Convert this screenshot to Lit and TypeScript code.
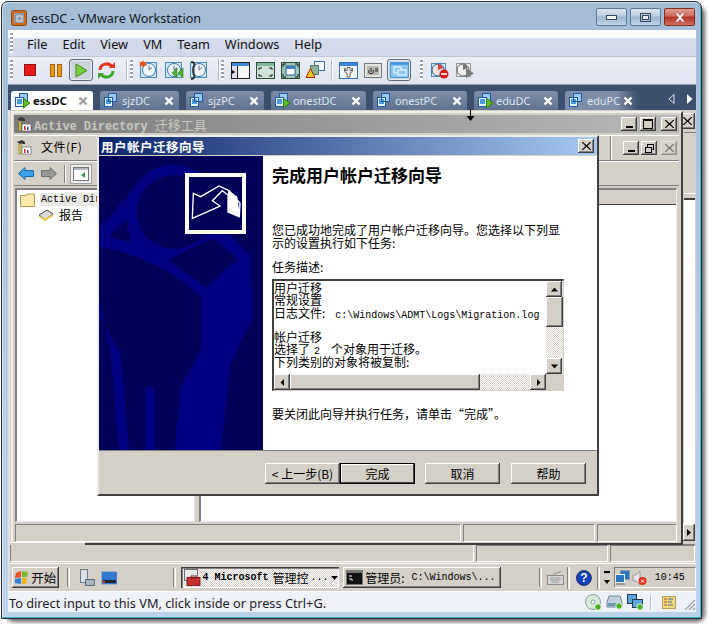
import { LitElement, html, css, svg } from "lit";
import { customElement } from "lit/decorators.js";

const vmIcon = (play: boolean) => html`<svg class="tabicon" width="17" height="17" viewBox="0 0 17 17">
  <rect x="5.5" y="1.5" width="8" height="8" fill="#9cc8ec" stroke="#1c5ca8"/>
  <rect x="1.5" y="5.5" width="8" height="9" fill="#e8f3fc" stroke="#1c5ca8"/>
  <rect x="3" y="7" width="5" height="5" fill="#4a9ade"/>
  ${play ? svg`<path d="M9.5 6.5 L16 11 L9.5 16 Z" fill="#5cc020" stroke="#2e8010"/>` : svg`<rect x="5.5" y="5.5" width="4" height="4" fill="none" stroke="#1c5ca8"/>`}
</svg>`;

const clock = (extra: unknown) => html`<svg width="20" height="20" viewBox="0 0 20 20">
  <rect x="1.5" y="2.5" width="16" height="15" fill="#cfe4f6" stroke="#4a8cc4"/>
  <circle cx="10" cy="10" r="6.5" fill="#eef6fc" stroke="#3c78ac"/>
  <path d="M10 5.5V10L13 7.5" fill="none" stroke="#5a6a7a"/>
  ${extra}
</svg>`;

const winIcon = (inner: unknown, border = "#222", title = "#3a8ad8") => html`<svg width="19" height="17" viewBox="0 0 19 17">
  <rect x=".5" y=".5" width="18" height="16" fill="#f6f6f6" stroke="${border}"/>
  <rect x="1" y="1" width="17" height="3" fill="${title}"/>
  ${inner}
</svg>`;

const SB = (d: string) => html`<div class="b3 sbtn"><svg width="7" height="7" viewBox="0 0 7 7"><path d="${d}" fill="#000"/></svg></div>`;

const UP = "M3.5 1.5L7 5.5H0Z", DN = "M0 1.5H7L3.5 5.5Z", LF = "M5 0V7L1.5 3.5Z", RT = "M2 0V7L5.5 3.5Z";

const ICON_X = html`<svg width="9" height="8" viewBox="0 0 9 8"><path d="M1 0L4.5 3.2L8 0H9V.5L5.5 4L9 7.5V8H8L4.5 4.8L1 8H0V7.5L3.5 4L0 .5V0Z" fill="#000"/></svg>`;
const dot = svg`<circle cx="0" cy="0" r="3.2" fill="#48b020" stroke="#fff" stroke-width=".8"/>`;
const toolIcon = html`<svg width="16" height="16" viewBox="0 0 16 16"><path d="M1 3L6 1L9 3V5H6V4L4 5Z" fill="#333"/><rect x="3" y="5" width="2" height="10" fill="#f0e010" stroke="#555" stroke-width=".5"/><rect x="6" y="8" width="9" height="7" fill="#fff" stroke="#555" stroke-width=".6"/><rect x="8" y="10" width="1.5" height="4" fill="#d02020"/><rect x="11" y="11" width="1.5" height="3" fill="#304080"/></svg>`;

const TABS = [
  { n: "essDC", w: 82, play: true, on: true },
  { n: "sjzDC", w: 79, play: false },
  { n: "sjzPC", w: 78, play: false },
  { n: "onestDC", w: 95, play: true },
  { n: "onestPC", w: 94, play: false },
  { n: "eduDC", w: 84, play: true },
  { n: "eduPC", w: 73, play: false },
];

const grip = html`<span class="grip"></span>`;

@customElement("app-root")
export class AppRoot extends LitElement {
  static styles = css`
    :host { display: block; width: 708px; height: 624px; background: #fff; overflow: hidden; position: relative; font-family: "Noto Sans", "Noto Sans CJK SC", sans-serif; }
    * { box-sizing: border-box; }
    .shadow { position: absolute; left: 6px; top: 6px; width: 699px; height: 616px; background: #666; filter: blur(2px); border-radius: 8px; }
    .win { position: relative; margin: 1px 0 0 1px; width: 701px; height: 618px; border: 1px solid #2a2f35; border-radius: 7px 7px 0 0; background: linear-gradient(180deg, #a4bcd6 0, #b6cde4 60%, #bcd4ea 100%); box-shadow: inset 1px 1px rgba(255,255,255,.45), inset -1px -1px #38b0d0; display: flex; flex-direction: column; padding: 0 5px 6px 6px; }
    .title { height: 28px; display: flex; align-items: center; gap: 4px; padding: 4px 0 0 3px; font-size: 12.6px; color: #10181f; flex: none; }
    .title .sp { flex: 1; }
    .caps { display: flex; gap: 3px; padding: 0 1px 0 0; margin-top: -2px; }
    .cap { width: 31px; height: 18px; border: 1px solid #5a7a9a; border-radius: 2px; background: linear-gradient(180deg,#dde8f2 0,#b8cce0 45%,#9cb6d0 50%,#c0d6e8 100%); display: flex; align-items: center; justify-content: center; }
    .cap.close { background: linear-gradient(180deg,#e0a090 0,#cc6a58 45%,#b03020 50%,#d07060 100%); border-color: #803020; }
    .menu { height: 27px; flex: none; background: linear-gradient(180deg, #fff 0, #f8f9fc 30%, #d4dbec 34%, #d2d9ec 100%); border-bottom: 1px solid #c0c6d4; display: flex; align-items: center; padding-left: 2px; font-size: 12.75px; color: #101010; }
    .menu .items { display: flex; gap: 15px; padding: 1px 0 0 14px; }
    .grip { display: block; width: 3px; align-self: stretch; margin: 3px 0; background: repeating-linear-gradient(180deg, #9aa0ac 0 2px, #fff 2px 4px); }
    .tools { height: 28px; flex: none; background: linear-gradient(180deg,#eceff6,#dfe4f0); border-bottom: 1px solid #9aa0b0; display: flex; align-items: center; padding: 0 0 1px 2px; }
    .tools svg { display: block; }
    .tg { display: flex; align-items: center; }
    .sep { width: 2px; height: 22px; background: #b8bcc8; border-right: 1px solid #fff; }
    .tb { display: flex; align-items: center; justify-content: center; height: 22px; }
    .tb.on { border: 1px solid #606a78; border-radius: 3px; background: #cdd3dd; box-shadow: inset 0 0 0 1px #e8ecf2; }
    .strip { height: 25px; flex: none; background: #3c5070; display: flex; align-items: flex-end; gap: 7px; padding-left: 3px; position: relative; }
    .tab { height: 19px; border-radius: 3px 3px 0 0; background: linear-gradient(180deg,#7f8ea8,#5f7290); color: #dfe6f0; font-size: 10.9px; display: flex; align-items: center; padding: 0 5px 0 3px; gap: 2px; line-height: 19px; }
    .tab .nm { flex: 1; }
    .tab.on { background: #fff; color: #101010; font-weight: 700; font-size: 11.4px; }
    .tab.fade { background: linear-gradient(90deg,#7f8ea8 70%,#3c5070); }
    .tab svg.x { flex: none; }
    .arrows { position: absolute; right: 3px; top: 9px; display: flex; gap: 11px; }
    .vm { flex: 1; display: flex; flex-direction: column; background: #d4d0c8; border-left: 2px solid #e0e0e4; min-height: 0; font-family: "Liberation Mono", "Noto Sans CJK SC", monospace; font-size: 12px; color: #000; }
    .desk { height: 452px; position: relative; flex: none; background: #d4d0c8; }
    .back { position: absolute; inset: 0; }
    .back-x { position: absolute; right: 1px; top: 3px; width: 16px; height: 16px; }
    .back-col { position: absolute; right: 0; top: 22px; width: 12px; height: 62px; border-top: 1px solid #808080; border-bottom: 1px solid #fff; }
    .back-white { position: absolute; right: 1px; top: 88px; width: 11px; height: 326px; background: #fff; border-top: 2px solid #404040; }
    .back-arrow { position: absolute; right: 1px; top: 414px; width: 12px; height: 17px; }
    .back-status { position: absolute; left: 0; right: 1px; top: 434px; height: 18px; display: grid; grid-template-columns: 464px 132px 1fr; gap: 2px; border-top: 1px solid #808080; }
    .cell { border-top: 1px solid #808080; border-left: 1px solid #808080; border-right: 1px solid #fff; border-bottom: 1px solid #fff; }
    .b3 { background: #d4d0c8; box-shadow: inset -1px -1px #404040, inset 1px 1px #fff, inset -2px -2px #808080; display: flex; align-items: center; justify-content: center; }
    .ad { position: absolute; left: 1px; top: 1px; width: 672px; height: 434px; background: #d4d0c8; border-top: 2px solid #f0eee8; border-left: 2px solid #f0eee8; border-right: 2px solid #404040; border-bottom: 2px solid #404040; padding: 2px 2px 1px 1px; display: flex; flex-direction: column; }
    .patch { position: absolute; left: 0; top: 432px; width: 75px; height: 3px; background: #d4d0c8; border-top: 1px solid #fff; }
    .ad-t { height: 18px; flex: none; background: linear-gradient(90deg, #7c7c7c, #b8b8b8); display: flex; align-items: center; color: #c8c8c0; font-weight: 700; gap: 2px; padding-left: 2px; font-size: 12px; letter-spacing: -.1px; }
    .ad-t span.cjk { font-weight: 400; font-size: 13px; letter-spacing: 0; }
    .ad-t .sp { flex: 1; }
    .mb { width: 16px; height: 14px; margin-left: 1px; flex: none; }
    .ad-t .mb:last-child { margin-right: 2px; }
    .ad-m { height: 26px; flex: none; margin-top: 2px; display: flex; align-items: center; border-top: 1px solid #fff; border-bottom: 1px solid #808080; gap: 6px; padding: 0 0 3px 2px; font-size: 12px; font-family: "Noto Sans CJK SC", sans-serif; letter-spacing: .5px; }
    .ad-m .sp { flex: 1; }
    .ad-m .div { width: 2px; align-self: stretch; margin-bottom: -3px; background: #808080; border-right: 1px solid #fff; }
    .ad-m .mdi { display: flex; gap: 1px; padding: 3px 2px 0 4px; }
    .ad-tb { height: 25px; flex: none; display: flex; align-items: center; gap: 7px; padding-left: 4px; border-bottom: 1px solid #808080; border-top: 1px solid #fff; }
    .ad-tb .v { width: 2px; height: 18px; background: #808080; border-right: 1px solid #fff; }
    .ad-tb .t2 { margin-left: -3px; }
    .ad-b { flex: 1; display: grid; grid-template-columns: 180px 1fr; gap: 4px; margin: 2px 2px 2px 1px; min-height: 0; }
    .pane { background: #fff; border-top: 2px solid #808080; border-left: 2px solid #808080; border-right: 1px solid #e8e8e8; border-bottom: 1px solid #e8e8e8; }
    .tree { padding: 1px 0 0 3px; }
    .tree .r { display: flex; align-items: center; gap: 5px; height: 17px; white-space: nowrap; overflow: hidden; }
    .tree .r .sel { font-size: 10px; background: #e8e8e4; padding: 1px 0 1px 1px; }
    .tree .r + .r { padding-left: 18px; margin-top: -2px; font-family: "Noto Sans CJK SC", sans-serif; font-size: 12px; }
    .head { height: 15px; background: #d4d0c8; border-bottom: 1px solid #404040; }
    .ad-s { height: 18px; flex: none; display: grid; grid-template-columns: 446px 132px 1fr; gap: 2px; margin: 0 2px 0 1px; }
    .dlg { position: absolute; left: 87px; top: 25px; width: 502px; height: 361px; background: #d4d0c8; border-top: 2px solid #eeece6; border-left: 2px solid #eeece6; border-right: 2px solid #404040; border-bottom: 2px solid #404040; display: flex; flex-direction: column; font-family: "Noto Sans CJK SC", sans-serif; }
    .dlg-t { height: 18px; flex: none; margin-bottom: 1px; background: linear-gradient(90deg,#0a246a,#a6caf0); color: #fff; font-size: 12.5px; font-weight: 700; display: flex; align-items: center; padding: 0 2px 0 2px; letter-spacing: .5px; justify-content: space-between; }
    .dlg-t .b3 { width: 16px; height: 14px; margin-right: 1px; }
    .dlg-c { height: 295px; flex: none; display: flex; background: #fff; border-bottom: 1px solid #808080; min-height: 0; }
    .side { width: 164px; height: 294px; flex: none; display: block; }
    .body { flex: 1; padding: 9px 0 0 9px; min-width: 0; font-size: 12px; line-height: 13px; }
    .h { font-size: 17px; font-weight: 700; line-height: 20px; margin: 0 0 38px; }
    .p { margin: 0 0 11px; letter-spacing: 0; }
    .lb { width: 292px; height: 112px; border-top: 2px solid #404040; border-left: 2px solid #404040; border-right: 1px solid #d4d0c8; border-bottom: 1px solid #d4d0c8; display: grid; grid-template-columns: 1fr 17px; grid-template-rows: 1fr 16px; margin-bottom: 16px; }
    .lbt { padding: 1px 0 0 0; overflow: hidden; font-size: 12px; min-height: 0; }
    .ln { height: 12.3px; line-height: 12.3px; white-space: nowrap; }
    .ln .en { font-family: "Liberation Mono", monospace; font-size: 10px; margin: 0 11px 0 4px; }
    .ln .en.f { margin: 0 0 0 10px; }
    .vs, .hs { display: flex; background: repeating-conic-gradient(#d4d0c8 0 25%, #fff 0 50%) 0 0 / 2px 2px; }
    .vs { flex-direction: column; }
    .sbtn { width: 16px; height: 16px; flex: none; }
    .vs .th { height: 30px; flex: none; }
    .vs .sp, .hs .sp { flex: 1; }
    .hs .th { width: 190px; flex: none; }
    .corner { background: #d4d0c8; }
    .dlg-b { flex: 1; display: flex; align-items: flex-start; padding: 12px 0 0 166px; }
    .btn { width: 75px; height: 21px; font-size: 12px; letter-spacing: 0; line-height: 1; }
    .btn.def { outline: 1px solid #000; outline-offset: -1px; box-shadow: inset -2px -2px #404040, inset 2px 2px #fff; width: 75px; }
    .m10 { margin-left: 10px; }
    .m11 { margin-left: 11px; }
    .bar { height: 29px; flex: 1; display: flex; align-items: center; border-top: 1px solid #fff; padding-left: 2px; margin-top: 1px; font-family: "Noto Sans CJK SC", sans-serif; }
    .start { width: 47px; height: 21px; gap: 1px; font-size: 12.5px; }
    .bsep { width: 3px; height: 19px; border-left: 1px solid #808080; border-right: 1px solid #fff; background: #e8e6e0; margin: 0 8px; }
    .tk { width: 159px; height: 21px; margin-right: 4px; display: flex; align-items: center; justify-content: flex-start; gap: 2px; white-space: nowrap; padding-left: 3px; font-size: 12px; overflow: hidden; }
    .tk.on { background: repeating-conic-gradient(#d4d0c8 0 25%, #fff 0 50%) 0 0 / 2px 2px; box-shadow: inset 1px 1px #404040, inset 2px 2px #808080, inset -1px -1px #fff; }
    .tk .en { font-family: "Liberation Mono", monospace; font-size: 10px; }
    .tk .en.num { font-weight: 700; margin-left: -1px; margin-right: 2px; }
    .tk .en.path { margin-left: 5px; }
    .tk svg { flex: none; }
    .tray { height: 21px; width: 83px; display: flex; align-items: center; gap: 2px; padding-left: 0; margin-left: 4px; border-top: 1px solid #808080; border-left: 1px solid #808080; border-right: 1px solid #fff; border-bottom: 1px solid #fff; font-family: "Liberation Mono", monospace; font-size: 10px; }
    .status { height: 21px; flex: none; background: #eff1f8; border-top: 1px solid #fff; display: flex; align-items: center; padding: 1px 0 0 1px; font-size: 12.75px; color: #1c1c28; }
    .status .sp { flex: 1; }
    .status .ic { display: flex; align-items: center; gap: 4px; }
    .status svg { display: block; }
    .cursor { position: absolute; left: 466px; top: 110px; }
  `;

  render() {
    return html`
      <div class="shadow"></div>
      <div class="win">
        <div class="title">
          <svg width="16" height="16" viewBox="0 0 16 16"><rect x=".5" y=".5" width="15" height="15" rx="2" fill="#d06a18" stroke="#8c4a14"/><rect x="3" y="3" width="10" height="10" fill="#8a9aaa"/><rect x="6" y="6" width="5" height="5" fill="none" stroke="#e8e8e8"/></svg>
          <span>essDC - VMware Workstation</span>
          <span class="sp"></span>
          <div class="caps">
            <div class="cap"><svg width="11" height="5"><rect x=".5" y=".5" width="10" height="4" fill="#f0f4f8" stroke="#38485c"/></svg></div>
            <div class="cap"><svg width="11" height="9"><rect x=".5" y=".5" width="10" height="8" fill="none" stroke="#38485c"/><rect x="2.5" y="2.5" width="6" height="4" fill="#eef" stroke="#38485c"/></svg></div>
            <div class="cap close"><svg width="12" height="9" viewBox="0 0 12 9"><path d="M1 0H4L6 2.5L8 0H11L7.5 4.5L11 9H8L6 6.5L4 9H1L4.5 4.5Z" fill="#fff" stroke="#7a4030" stroke-width=".5"/></svg></div>
          </div>
        </div>

        <div class="menu">
          ${grip}
          <div class="items">${["File","Edit","View","VM","Team","Windows","Help"].map(m => html`<span>${m}</span>`)}</div>
        </div>

        <div class="tools">
          ${grip}
          <div class="tg" style="margin-left:11px"><svg width="12" height="12"><rect x=".5" y=".5" width="11" height="11" fill="#e81818" stroke="#8c1010"/></svg></div>
          <div class="tg" style="margin-left:14px"><svg width="13" height="13"><rect x=".5" y=".5" width="4" height="12" fill="#f09a10" stroke="#a86008"/><rect x="7.5" y=".5" width="4" height="12" fill="#f09a10" stroke="#a86008"/></svg></div>
          <div class="tb on" style="margin-left:6px;width:24px"><svg width="13" height="15" viewBox="0 0 13 15"><path d="M1 1L12 7.5L1 14Z" fill="#78d040" stroke="#3a8c18"/></svg></div>
          <div class="tg" style="margin-left:5px"><svg width="17" height="17" viewBox="0 0 17 17"><path d="M2 8A6.5 6.5 0 0 1 14 5" fill="none" stroke="#e03020" stroke-width="3"/><path d="M15 9A6.5 6.5 0 0 1 3 12" fill="none" stroke="#40a830" stroke-width="3"/><path d="M11 6H17V0Z" fill="#e03020"/><path d="M6 11H0V17Z" fill="#40a830"/></svg></div>
          <span class="sep" style="margin-left:11px"></span><span class="grip" style="margin-left:2px"></span>
          <div class="tg" style="margin-left:6px;gap:5px">
            ${clock(svg`<path d="M4 0L5 2.5L8 1.5L6.5 4L8 6L5 5.5L4 8L3 5.5L0 6L1.5 4L0 1.5L3 2.5Z" fill="#f05010"/>`)}
            ${clock(svg`<path d="M19 8V18L14 13ZM13 8V18L8 13Z" fill="#50b030" stroke="#2a7a18" stroke-width=".6"/>`)}
            ${clock(svg`<path d="M2 2C6 2 6 5 4.5 7V14C6 16 6 19 2 19" fill="none" stroke="#333" stroke-width="2"/>`)}
          </div>
          <span class="sep" style="margin-left:9px"></span><span class="grip" style="margin-left:1px"></span>
          <div class="tg" style="margin-left:7px;gap:6px">
            ${winIcon(svg`<rect x="1" y="4" width="5" height="12" fill="#dde"/><path d="M1 8L4 10L1 12Z" fill="#000"/><path d="M6.5 4V16" stroke="#222"/>`)}
            ${winIcon(svg`<rect x="1" y="4" width="17" height="12" fill="#cfe4d8"/><path d="M3 8V6H6M16 8V6H13M3 12V14H6M16 12V14H13" fill="none" stroke="#111"/>`, "#2a4a38", "#7ab898")}
            ${winIcon(svg`<rect x="1" y="1" width="17" height="15" fill="#9cc8b4"/><rect x="5" y="4" width="9" height="9" fill="#fff" stroke="#3060a0"/><rect x="5" y="4" width="9" height="3" fill="#4080c8"/><path d="M2 5V2H5M17 5V2H14M2 12V15H5M17 12V15H14" fill="none" stroke="#111"/>`, "#2a4a38", "#9cc8b4")}
            <svg width="19" height="18" viewBox="0 0 19 18"><rect x="8.5" y=".5" width="10" height="9" fill="#f4f8fc" stroke="#3a6ca8"/><rect x="4.5" y="4.5" width="8" height="9" fill="#8ab098" stroke="#5a7a68"/><path d="M4.5 7.5L9 16.5H0Z" fill="#f8d020" stroke="#b02010"/></svg>
          </div>
          <span class="sep" style="margin-left:6px"></span>
          <div class="tg" style="margin-left:6px;gap:6px">
            ${winIcon(svg`<path d="M6 6C4.5 9 6.5 11 8 11V15H11V11C12.5 11 14.5 9 13 6V8.5H11V5.5H8V8.5H6Z" fill="#e8e8e8" stroke="#333" stroke-width=".7"/>`, "#2c70c0", "#3a8ad8")}
            <svg width="18" height="15" viewBox="0 0 18 15"><rect x=".5" y=".5" width="17" height="14" fill="#e6e6e0" stroke="#777"/><rect x="3" y="3" width="12" height="9" fill="#b8b8b0"/><path d="M7 5V9M5 7A2.4 2.4 0 1 0 9 7M11 6H14M11 8H14" fill="none" stroke="#222"/></svg>
          </div>
          <div class="tb on" style="margin-left:5px;width:24px"><svg width="19" height="16" viewBox="0 0 19 16"><rect width="19" height="16" fill="#4a9ae0"/><rect x="1" y="3" width="17" height="12" fill="#8cc4f0"/><rect x="4" y="5" width="7" height="6" fill="none" stroke="#fff"/><rect x="8" y="8" width="8" height="5" fill="#8cc4f0" stroke="#fff"/></svg></div>
          <span class="grip" style="margin-left:9px"></span>
          <div class="tg" style="margin-left:8px;gap:7px">
            <svg width="18" height="18" viewBox="0 0 18 18"><rect x=".5" y="2.5" width="14" height="13" fill="#cfe4f6" stroke="#4a8cc4"/><circle cx="7" cy="9" r="6" fill="#f0e0e0" stroke="#405a78"/><path d="M7 3V9L12 7A6 6 0 0 0 7 3Z" fill="#d04040"/><circle cx="13" cy="13" r="4.5" fill="#e01818"/><rect x="10" y="12.2" width="6" height="1.6" fill="#fff"/></svg>
            <svg width="18" height="18" viewBox="0 0 18 18"><rect x=".5" y="2.5" width="14" height="13" fill="#e8e8e8" stroke="#999"/><circle cx="7" cy="9" r="6" fill="#f0f0f0" stroke="#666"/><path d="M7 3V9L12 7A6 6 0 0 0 7 3Z" fill="#777"/><path d="M10 7L18 12.5L10 17Z" fill="#788078"/></svg>
          </div>
        </div>

        <div class="strip">
          ${TABS.map((t, i) => html`
            <div class="tab ${t.on ? "on" : ""} ${i === 6 ? "fade" : ""}" style="width:${t.w}px">
              ${vmIcon(t.play)}
              <span class="nm">${t.n}</span>
              <svg class="x" width="10" height="10" viewBox="0 0 10 10"><path d="M1.5 1.5L8.5 8.5M8.5 1.5L1.5 8.5" stroke="${t.on ? "#a0a0a0" : "#fff"}" stroke-width="2.4"/></svg>
            </div>`)}
          <div class="arrows">
            <svg width="7" height="10"><path d="M6 .5V9.5L1 5Z" fill="#3c5070" stroke="#e0e4ea"/></svg>
            <svg width="7" height="10"><path d="M1 0V10L6.5 5Z" fill="#fff"/></svg>
          </div>
        </div>

        <div class="vm">
          <div class="desk">
            <div class="back">
              <div class="back-x b3">${ICON_X}</div>
              <div class="back-col"></div>
              <div class="back-white"></div>
              <div class="back-arrow b3"><svg width="5" height="7"><path d="M0 0V7L4 3.5Z"/></svg></div>
              <div class="back-status"><div class="cell" style="border-top:0"></div><div class="cell"></div><div class="cell"></div></div>
            </div>

            <div class="ad">
              <div class="ad-t">
                ${toolIcon}
                <span>Active Directory <span class="cjk">迁移工具</span></span>
                <span class="sp"></span>
                <div class="b3 mb" style="align-items:flex-end;padding-bottom:3px"><svg width="7" height="2"><rect width="7" height="2"/></svg></div>
                <div class="b3 mb"><svg width="10" height="10"><rect x=".5" y=".5" width="9" height="9" fill="none" stroke="#000"/><rect y="0" width="10" height="2"/></svg></div>
                <div class="b3 mb" style="margin-left:3px">${ICON_X}</div>
              </div>
              <div class="ad-m">
                ${toolIcon}
                <span style="margin-left:3px">文件(F)</span>
                <span class="sp"></span>
                <span class="div"></span>
                <div class="mdi">
                  <div class="b3 mb" style="align-items:flex-end;padding-bottom:3px"><svg width="7" height="2"><rect width="7" height="2"/></svg></div>
                  <div class="b3 mb"><svg width="9" height="9"><rect x="2.5" y=".5" width="6" height="5" fill="none" stroke="#000"/><rect x=".5" y="3.5" width="6" height="5" fill="#d4d0c8" stroke="#000"/></svg></div>
                  <div class="b3 mb" style="margin-left:3px;opacity:.45">${ICON_X}</div>
                </div>
              </div>
              <div class="ad-tb">
                <svg width="16" height="13" viewBox="0 0 16 13"><path d="M.5 6.5L7 .5V3.5H15.5V9.5H7V12.5Z" fill="#3aa0e8" stroke="#1a6aa8"/></svg>
                <svg width="16" height="13" viewBox="0 0 16 13"><path d="M15.5 6.5L9 .5V3.5H.5V9.5H9V12.5Z" fill="#989898" stroke="#707070"/></svg>
                <span class="v"></span>
                <svg class="t2" width="22" height="20" viewBox="0 0 22 20"><rect x=".5" y=".5" width="21" height="19" fill="#eee" stroke="#a0a0a0"/><rect x="3.5" y="3.5" width="15" height="13" fill="#fff" stroke="#777"/><rect x="4" y="4" width="14" height="2" fill="#b0b8c8"/><path d="M15 8V14L11 11Z" fill="#30a040"/></svg>
              </div>
              <div class="ad-b">
                <div class="pane tree">
                  <div class="r"><svg width="15" height="14" viewBox="0 0 15 14"><path d="M.5 2.5H6L7 1H14.5V13.5H.5Z" fill="#fce8a8" stroke="#b89848"/></svg><span class="sel">Active Directory</span></div>
                  <div class="r"><svg width="16" height="12" viewBox="0 0 16 12"><path d="M1 6L9 1L15 5L7 11Z" fill="#d8d8d8" stroke="#444"/><path d="M1 7L7 11L15 6" fill="none" stroke="#e8c830" stroke-width="1.5"/></svg><span>报告</span></div>
                </div>
                <div class="pane"><div class="head"></div></div>
              </div>
              <div class="ad-s"><div class="cell"></div><div class="cell"></div><div class="cell"></div></div>
            </div>
            <div class="patch"></div>

            <div class="dlg">
              <div class="dlg-t"><span>用户帐户迁移向导</span><div class="b3">${ICON_X}</div></div>
              <div class="dlg-c">
                <svg class="side" viewBox="5 18 492 882" shape-rendering="crispEdges">
                  <defs>
                    <pattern id="d" width="6" height="6" patternUnits="userSpaceOnUse"><rect width="6" height="6" fill="#000030"/><rect width="3" height="3" fill="#000080"/><rect x="3" y="3" width="3" height="3" fill="#000080"/></pattern>
                  </defs>
                  <rect x="5" y="18" width="492" height="882" fill="url(#d)"/>
                  <path d="M5 235L130 95L300 75L395 250L460 315L465 500L400 640L370 900L232 900L250 710L312 600L312 440Q180 320 5 290ZM5 450L40 610L65 900L95 900L70 610L40 560L5 500ZM142 710H172V900H142Z" fill="#000080"/>
                  <circle cx="229" cy="186" r="141" fill="#000080"/>
                  <circle cx="229" cy="186" r="111" fill="url(#d)"/>
                  <path d="M35 260L88 205L100 278Z M210 330L345 265L420 325L328 412Z" fill="url(#d)"/>
                  <rect x="270" y="75" width="171" height="171" fill="url(#d)" stroke="#fff" stroke-width="12"/>
                  <path d="M288 130L310 140L365 108L395 122L428 160L426 200L392 186L392 135L375 122L345 152L368 168L285 205Z" fill="none" stroke="#fff" stroke-width="4" shape-rendering="auto"/>
                  <path d="M392 120L420 140L428 200L392 186Z" fill="#fff" shape-rendering="auto"/>
                </svg>
                <div class="body">
                  <div class="h">完成用户帐户迁移向导</div>
                  <div class="p">您已成功地完成了用户帐户迁移向导。您选择以下列显<br>示的设置执行如下任务:</div>
                  <div class="p" style="margin-bottom:6px">任务描述:</div>
                  <div class="lb">
                    <div class="lbt">
                      <div class="ln">用户迁移</div>
                      <div class="ln">常规设置</div>
                      <div class="ln">日志文件:<span class="en f">c:\\Windows\\ADMT\\Logs\\Migration.log</span></div>
                      <div class="ln"></div>
                      <div class="ln">帐户迁移</div>
                      <div class="ln">选择了<span class="en">2</span>个对象用于迁移。</div>
                      <div class="ln">下列类别的对象将被复制:</div>
                    </div>
                    <div class="vs">${SB(UP)}<div class="b3 th"></div><div class="sp"></div>${SB(DN)}</div>
                    <div class="hs">${SB(LF)}<div class="b3 th"></div><div class="sp"></div>${SB(RT)}</div>
                    <div class="corner"></div>
                  </div>
                  <div>要关闭此向导并执行任务，请单击“完成”。</div>
                </div>
              </div>
              <div class="dlg-b">
                <div class="b3 btn">&lt; 上一步(B)</div>
                <div class="b3 btn def">完成</div>
                <div class="b3 btn m10">取消</div>
                <div class="b3 btn m11">帮助</div>
              </div>
            </div>
          </div>

          <div class="bar">
            <div class="b3 start">
              <svg width="16" height="16" viewBox="0 0 16 16"><path d="M2 3L7 1V7L1 8Z" fill="#e85020"/><path d="M8 1L14 2L13 7H8Z" fill="#80b830"/><path d="M1 9L7 8V14L1 13Z" fill="#3080d8"/><path d="M8 8H13L12 14L8 14Z" fill="#f0b820"/></svg>
              <span>开始</span>
            </div>
            <span class="bsep"></span>
            <svg width="16" height="17" viewBox="0 0 16 17" style="margin-left:1px"><rect x="1.5" y=".5" width="7" height="13" fill="#d8e0e8" stroke="#6a7a8a"/><rect x="6.5" y="10.5" width="9" height="6" fill="#a8b4c0" stroke="#5a6a7a"/></svg>
            <svg width="17" height="14" viewBox="0 0 17 14" style="margin-left:6px"><rect x=".5" y=".5" width="16" height="13" fill="#3078d0" stroke="#a0b0c0"/><rect x="2" y="9" width="13" height="3" fill="#222"/><rect x="2" y="10" width="2" height="2" fill="#e04020"/></svg>
            <span class="bsep" style="margin-left:56px;margin-right:5px"></span>
            <div class="tk on">
              <svg width="17" height="17" viewBox="0 0 17 17"><rect x=".5" y=".5" width="13" height="11" fill="#e8e8e8" stroke="#707070"/><rect x="3" y="8.5" width="13" height="8" fill="#c83030" stroke="#802020"/><rect x="7" y="7" width="5" height="2" fill="none" stroke="#802020"/></svg>
              <span class="en num">4 Microsoft</span><span>管理控</span><span class="en">...</span>
              <svg width="7" height="4" style="margin-left:1px"><path d="M0 0H7L3.5 4Z"/></svg>
            </div>
            <div class="b3 tk">
              <svg width="17" height="15" viewBox="0 0 17 15"><rect width="17" height="15" fill="#777"/><rect x="1" y="3" width="15" height="11" fill="#111"/><path d="M3 6L6 6M3 9H6V11" stroke="#fff"/></svg>
              <span>管理员:</span><span class="en path">C:\\Windows\\...</span>
            </div>
            <span class="bsep" style="margin-left:34px;margin-right:5px"></span>
            <svg width="17" height="15" viewBox="0 0 17 15"><rect x=".5" y="5.5" width="16" height="9" fill="#d8d8d8" stroke="#888"/><path d="M3 8H14M3 10H14M5 12H12" stroke="#999"/><path d="M6 5C8 2 11 4 14 1" fill="none" stroke="#888"/></svg>
            <span class="bsep" style="height:22px;margin:0 3px 0 3px"></span>
            <svg width="16" height="16" viewBox="0 0 16 16" style="margin-left:3px"><circle cx="8" cy="8" r="7.5" fill="#1040c0" stroke="#203060"/><text x="8" y="12.5" text-anchor="middle" font-size="12" font-weight="700" fill="#fff" font-family="Liberation Sans">?</text></svg>
            <span class="bsep" style="height:22px;margin:0 0 0 5px"></span>
            <svg width="6" height="14" viewBox="0 0 6 14" style="margin-left:4px"><rect y="0" width="6" height="2"/><path d="M0 9H6L3 13Z"/></svg>
            <div class="tray">
              <svg width="15" height="16" viewBox="0 0 15 16"><rect x="5.5" y=".5" width="9" height="9" fill="#2878c0" stroke="#999"/><rect x=".5" y="4.5" width="9" height="8" fill="#2878c0" stroke="#eee"/><path d="M1 14H10" stroke="#999" stroke-width="2"/></svg>
              <svg width="15" height="16" viewBox="0 0 15 16"><path d="M1 5H4L8 1V15L4 11H1Z" fill="#e8e8e8" stroke="#999"/><circle cx="10.5" cy="11" r="4" fill="#e83020"/><path d="M9 9.5L12 12.5M12 9.5L9 12.5" stroke="#fff"/></svg>
              <span style="margin-left:6px">10:45</span>
            </div>
          </div>
        </div>

        <div class="status">
          <span>To direct input to this VM, click inside or press Ctrl+G.</span>
          <span class="sp"></span>
          <div class="ic">
            <svg width="17" height="17" viewBox="0 0 17 17"><circle cx="8" cy="8" r="7.5" fill="#d8ecd8" stroke="#8a9aa8"/><circle cx="8" cy="8" r="2" fill="#fff" stroke="#8a9aa8"/><g transform="translate(13,13)">${dot}</g></svg>
            <svg width="17" height="15" viewBox="0 0 17 15"><path d="M3 1H14L16 7V12H1V7Z" fill="#c0d0dc" stroke="#6a8a9a"/><rect x="2" y="8" width="13" height="3" fill="#6a9ab0"/><g transform="translate(13,11)">${dot}</g></svg>
            <svg width="17" height="17" viewBox="0 0 17 17"><rect x=".5" y=".5" width="9" height="9" fill="#58a8e0" stroke="#283848"/><rect x="5.5" y="5.5" width="10" height="8" fill="#58a8e0" stroke="#283848"/><g transform="translate(13,13)">${dot}</g></svg>
            <span class="sep" style="height:15px;margin:0 6px 0 2px"></span>
            <svg width="14" height="13" viewBox="0 0 14 13"><rect x=".5" y=".5" width="13" height="12" fill="#f0dc80" stroke="#b8a050"/><path d="M2 3H5M2 6H5M2 9H5" stroke="#c04020"/><path d="M6 3H11M6 6H10M6 9H11" stroke="#4060a0"/></svg>
          </div>
          <svg width="12" height="11" viewBox="0 0 12 11" style="margin:4px 0 0 8px"><path d="M1 11L11 1M5 11L11 5M9 11L11 9" stroke="#9aa0a8" stroke-width="1.2"/></svg>
        </div>
      </div>
      <svg class="cursor" width="9" height="12" viewBox="0 0 9 12"><path d="M4 0H5V6H8.5L4.5 11L.5 6H4Z" fill="#000"/></svg>
    `;
  }
}
